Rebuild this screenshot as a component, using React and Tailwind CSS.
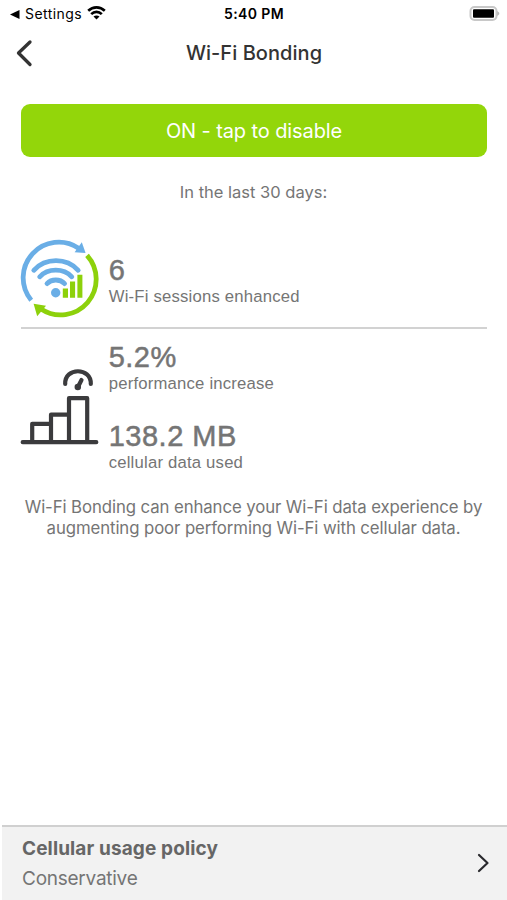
import React from "react";

function WifiGlyph() {
  return (
    <svg width="19" height="14" viewBox="0 0 19 14" fill="none" stroke="#000" strokeWidth="2.6">
      <path d="M1.2 4.8C6 .2 13 .2 17.8 4.8" />
      <path d="M4.2 8.1c3-3 7.6-3 10.6 0" />
      <path d="M9.5 13.4 6.5 10.5c1.6-1.5 4.4-1.5 6 0Z" fill="#000" stroke="none" />
    </svg>
  );
}

function SessionsIcon() {
  return (
    <svg className="shrink-0" width="80" height="80" viewBox="0 0 80 80" fill="none">
      <path d="M11.2 62.3A35.6 35.6 0 0 1 58.6 10.2" stroke="#6aaee6" strokeWidth="4.8" />
      <path d="M61.8 4.3 65.6 15 54.6 14.2Z" fill="#6aaee6" />
      <path d="M67 17.4A35.6 35.6 0 0 1 21 71" stroke="#8dd10b" strokeWidth="4.8" />
      <path d="M13.6 65.8 26 67.8 17.2 78.2Z" fill="#8dd10b" />
      <g stroke="#6aaee6" strokeWidth="4.8" strokeLinecap="round">
        <path d="M13.8 32.3C25.5 19.5 46.5 19.5 58.2 32.3" />
        <path d="M19.7 38.8C28 30 43.5 30 51.8 38.8" />
        <path d="M27 45.6C31.5 40.8 40 40.8 44.6 45.6" />
      </g>
      <circle cx="35.7" cy="54.8" r="4.7" fill="#6aaee6" />
      <path d="M42.8 50.5H48v9.2h-5.2ZM50 43.5h5.1v16.2H50ZM57.4 36.7h5v23h-5Z" fill="#8dd10b" />
    </svg>
  );
}

function PerformanceIcon() {
  return (
    <svg className="shrink-0" width="80" height="80" viewBox="0 0 80 80" fill="none" stroke="#3b3b3d" strokeWidth="4.2" strokeLinecap="round" strokeLinejoin="round">
      <path d="M2.7 76.2H76.3M12.2 76V57.8H31M31 76V48.7H49M49 76V32.2H67.2V76" />
      <path d="M45.2 18C44.5 1 71.3 1 70.8 18" />
      <path d="M58.2 20.5 61.5 14" />
      <circle cx="57.8" cy="21" r="2" fill="#3b3b3d" strokeWidth="2.5" />
    </svg>
  );
}

function Stat({ value, label }) {
  return (
    <div className="font-['Liberation_Sans',Arial,sans-serif] text-[#757575]">
      <div className="h-[33px] text-[29px] leading-[32px] tracking-[0.5px] whitespace-nowrap [-webkit-text-stroke:0.5px_#757575]">{value}</div>
      <div className="h-[20px] text-[16.7px] leading-[20px] tracking-[0.2px] whitespace-nowrap">{label}</div>
    </div>
  );
}

export default function App() {
  return (
    <div className="flex h-[900px] w-[507px] flex-col overflow-hidden bg-white font-['Inter',sans-serif] text-[#757575]">
      <div className="grid h-[28px] grid-cols-3 items-center pl-[10px] pr-[7px] text-black">
        <div className="flex items-center">
          <svg width="10" height="9" viewBox="0 0 10 9"><path d="M0 4.5 9.5 0v9Z" /></svg>
          <span className="ml-[5px] text-[14px] leading-[20px] tracking-[0.45px]">Settings</span>
          <span className="-mt-[2px] ml-[5px]"><WifiGlyph /></span>
        </div>
        <div className="-ml-[2px] text-center text-[14px] font-semibold leading-[20px] tracking-[0.4px]">5:40 PM</div>
        <div className="-mt-[2px] flex justify-end">
          <svg width="31" height="15" viewBox="0 0 31 15">
            <rect x="1.5" y="1" width="26" height="13" rx="4" fill="#fff" stroke="#c8c8c8" strokeWidth="2" />
            <rect x="4" y="3.2" width="21" height="8.6" rx="1" fill="#000" />
            <path d="M28.5 5.5c2 .8 2 3.2 0 4Z" fill="#b5b5b5" stroke="#b5b5b5" strokeWidth="0.5" />
          </svg>
        </div>
      </div>

      <header className="grid h-[49px] grid-cols-[40px_1fr_40px] items-center">
        <svg className="ml-[15px]" width="18" height="28" viewBox="0 0 18 28" fill="none" stroke="#333" strokeWidth="3.3" strokeLinecap="round" strokeLinejoin="round"><path d="M15 3 3.5 14 15 25.5" /></svg>
        <h1 className="pl-px text-center text-[20px] font-medium leading-[24px] tracking-[0.05px] text-[#333]">Wi-Fi Bonding</h1>
      </header>

      <button className="ml-[21px] mr-[20px] mt-[27px] h-[53px] rounded-[9px] bg-[#93d60a] text-[20px] leading-[24px] tracking-[-0.1px] text-white">ON - tap to disable</button>
      <p className="mt-[25px] h-[20px] text-center text-[16.5px] leading-[20px]">In the last 30 days:</p>

      <section className="ml-[21px] mr-[20px] mt-[36px] flex h-[91px] border-b-2 border-[#d2d2d2]">
        <div className="-ml-px"><SessionsIcon /></div>
        <div className="ml-[8.7px] mt-[16px]"><Stat value="6" label="Wi-Fi sessions enhanced" /></div>
      </section>

      <section className="mx-[20px] flex h-[152px]">
        <div className="mt-[37px]"><PerformanceIcon /></div>
        <div className="ml-[8.7px] mt-[12px] flex flex-col gap-[26px]">
          <Stat value="5.2%" label="performance increase" />
          <Stat value="138.2 MB" label="cellular data used" />
        </div>
      </section>

      <p className="mt-[16px] text-center text-[16.8px] leading-[21px] tracking-[-0.1px]">
        Wi-Fi Bonding can enhance your Wi-Fi data experience by<br />augmenting poor performing Wi-Fi with cellular data.
      </p>

      <footer className="ml-[2px] mt-auto flex h-[75px] items-center justify-between border-t-2 border-[#d0d0d0] bg-[#f2f2f2] pl-[20px] pr-[17px]">
        <div>
          <div className="text-[19px] font-bold leading-[30px] tracking-[0.12px] text-[#666]">Cellular usage policy</div>
          <div className="text-[19px] leading-[30px] tracking-[-0.25px]">Conservative</div>
        </div>
        <svg className="-mt-[2px]" width="14" height="20" viewBox="0 0 14 20" fill="none" stroke="#29292d" strokeWidth="2.2" strokeLinecap="round" strokeLinejoin="round"><path d="M3 2 11.5 10 3 18" /></svg>
      </footer>
    </div>
  );
}
